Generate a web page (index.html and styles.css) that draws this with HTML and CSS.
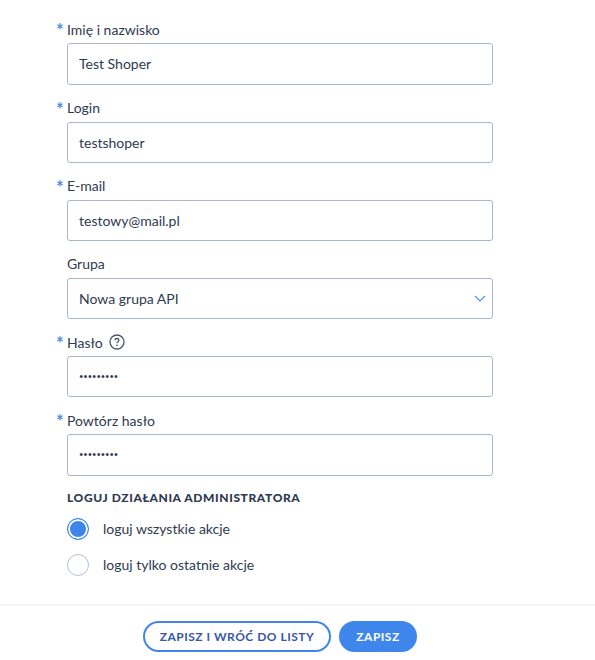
FILE: index.html
```html
<!DOCTYPE html>
<html lang="pl">
<head>
  <meta charset="utf-8">
  <title>Administrator</title>
  <link rel="stylesheet" href="styles.css">
</head>
<body>
  <form class="form">
    <div class="fields">
      <div class="field required">
        <label class="label">Imię i nazwisko</label>
        <input class="input" type="text" value="Test Shoper">
      </div>
      <div class="field required">
        <label class="label">Login</label>
        <input class="input" type="text" value="testshoper">
      </div>
      <div class="field required">
        <label class="label">E-mail</label>
        <input class="input" type="text" value="testowy@mail.pl">
      </div>
      <div class="field">
        <label class="label">Grupa</label>
        <div class="select-wrap">
          <select class="input select">
            <option>Nowa grupa API</option>
          </select>
          <svg class="chevron" width="12" height="7" viewBox="0 0 12 7" fill="none" stroke="#4a8cec" stroke-width="1.2">
            <path d="M1 1l5 5 5-5"/>
          </svg>
        </div>
      </div>
      <div class="field required">
        <label class="label">Hasło
          <svg class="help" width="16" height="16" viewBox="0 0 16 16" fill="none">
            <circle cx="8" cy="8" r="7" stroke="#4d566b" stroke-width="1.3"/>
            <path d="M6.1 6.300c0-1.100.9-1.800 1.900-1.800s1.900.7 1.900 1.700c0 1.500-1.900 1.500-1.900 3" stroke="#4d566b" stroke-width="1.300"/>
            <circle cx="8" cy="11.400" r=".8" fill="#4d566b"/>
          </svg>
        </label>
        <input class="input input-password" type="password" value="testtestt">
      </div>
      <div class="field required">
        <label class="label">Powtórz hasło</label>
        <input class="input input-password" type="password" value="testtestt">
      </div>
    </div>

    <div class="log-options">
      <h3 class="section-title">LOGUJ DZIAŁANIA ADMINISTRATORA</h3>
      <label class="radio-row">
        <input class="radio" type="radio" name="log" checked>
        <span>loguj wszystkie akcje</span>
      </label>
      <label class="radio-row">
        <input class="radio" type="radio" name="log">
        <span>loguj tylko ostatnie akcje</span>
      </label>
    </div>

    <div class="actions">
      <button class="btn btn-outline" type="button">ZAPISZ I WRÓĆ DO LISTY</button>
      <button class="btn btn-primary" type="button">ZAPISZ</button>
    </div>
  </form>
</body>
</html>
```

FILE: styles.css
```css
* {
  box-sizing: border-box;
}

body {
  margin: 0;
  background: #fff;
  color: #2f3a4f;
  font-family: "Lato", "Liberation Sans", sans-serif;
  font-size: 14px;
}

.form {
  padding-top: 20.4px;
}

.fields {
  display: flex;
  flex-direction: column;
  gap: 14px;
  width: 426px;
  margin-left: 67px;
}

.field {
  position: relative;
}

.required::before {
  content: "*";
  position: absolute;
  left: -11px;
  top: 1px;
  color: #4a8cec;
  font-size: 18px;
  line-height: 18px;
  font-weight: 700;
}

.label {
  display: flex;
  align-items: center;
  gap: 6px;
  height: 18px;
  margin-bottom: 5px;
}

.input {
  display: block;
  width: 100%;
  height: 41.2px;
  padding: 0 11px;
  border: 1px solid #a9b6d2;
  border-radius: 3px;
  background: #fff;
  color: #2f3a4f;
  font-family: inherit;
  font-size: 14px;
  outline: none;
}

.input-password {
  font-size: 7.5px;
}

.select-wrap {
  position: relative;
}

.select {
  appearance: none;
}

.chevron {
  position: absolute;
  right: 7px;
  top: 17px;
}

.log-options {
  margin: 14px 0 0 67px;
}

.section-title {
  margin: 0 0 13px;
  font-size: 12px;
  line-height: 15px;
  font-weight: 900;
  letter-spacing: 0.6px;
}

.radio-row {
  display: flex;
  align-items: center;
  gap: 14px;
  height: 22px;
  margin-bottom: 14px;
}

.radio {
  appearance: none;
  flex: none;
  width: 22px;
  height: 22px;
  margin: 0;
  border: 1px solid #b4bfd8;
  border-radius: 50%;
  background: #fff;
}

.radio:checked {
  border-color: #3f86ec;
  background: #3f86ec;
  box-shadow: inset 0 0 0 2px #fff;
}

.actions {
  display: flex;
  justify-content: center;
  gap: 8px;
  margin-top: 28px;
  padding: 15px 35px 0 0;
  border-top: 2px solid #f5f5f5;
}

.btn {
  height: 31px;
  border-radius: 16px;
  font-family: inherit;
  font-size: 12px;
  font-weight: 700;
  letter-spacing: 0.5px;
}

.btn-outline {
  width: 188px;
  border: 2px solid #3f86ec;
  background: #fff;
  color: #3a55a8;
}

.btn-primary {
  width: 78px;
  border: none;
  background: #3f86ec;
  color: #fff;
}
```
